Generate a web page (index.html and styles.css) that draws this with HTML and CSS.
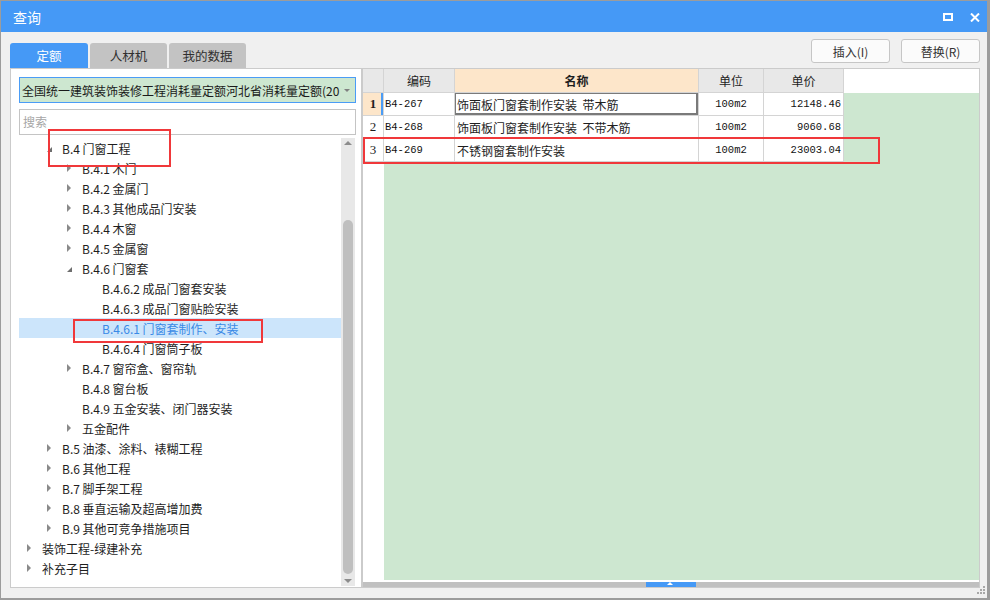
FILE: index.html
```html
<!DOCTYPE html>
<html lang="zh">
<head>
<meta charset="utf-8">
<title>查询</title>
<link rel="stylesheet" href="styles.css">
</head>
<body>
<div class="window">
  <div class="titlebar">
    <span class="title">查询</span>
    <div class="ctrls">
      <svg class="ico" width="10" height="8" viewBox="0 0 10 8"><rect x="1" y="1" width="8" height="6" fill="none" stroke="#fff" stroke-width="2"/></svg>
      <svg class="ico" width="10" height="9" viewBox="0 0 10 9"><path d="M1 0.5 L9 8.5 M9 0.5 L1 8.5" stroke="#fff" stroke-width="2"/></svg>
    </div>
  </div>
  <div class="body">
    <div class="toprow">
      <div class="tabs">
        <div class="tab active">定额</div>
        <div class="tab">人材机</div>
        <div class="tab">我的数据</div>
      </div>
      <div class="buttons">
        <button class="btn">插入(I)</button>
        <button class="btn">替换(R)</button>
      </div>
    </div>
    <div class="panes">
      <div class="left">
        <div class="dropdown">
          <span class="dd-text">全国统一建筑装饰装修工程消耗量定额河北省消耗量定额(20</span>
          <span class="dd-arrow"></span>
        </div>
        <div class="search">搜索</div>
        <div class="treewrap">
          <div class="tree">
            <div class="row l1"><span class="caret open"></span>B.4 门窗工程</div>
            <div class="row l2"><span class="caret closed"></span>B.4.1 木门</div>
            <div class="row l2"><span class="caret closed"></span>B.4.2 金属门</div>
            <div class="row l2"><span class="caret closed"></span>B.4.3 其他成品门安装</div>
            <div class="row l2"><span class="caret closed"></span>B.4.4 木窗</div>
            <div class="row l2"><span class="caret closed"></span>B.4.5 金属窗</div>
            <div class="row l2"><span class="caret open"></span>B.4.6 门窗套</div>
            <div class="row l3"><span class="caret"></span>B.4.6.2 成品门窗套安装</div>
            <div class="row l3"><span class="caret"></span>B.4.6.3 成品门窗贴脸安装</div>
            <div class="row l3 sel"><span class="caret"></span>B.4.6.1 门窗套制作、安装</div>
            <div class="row l3"><span class="caret"></span>B.4.6.4 门窗筒子板</div>
            <div class="row l2"><span class="caret closed"></span>B.4.7 窗帘盒、窗帘轨</div>
            <div class="row l2"><span class="caret"></span>B.4.8 窗台板</div>
            <div class="row l2"><span class="caret"></span>B.4.9 五金安装、闭门器安装</div>
            <div class="row l2"><span class="caret closed"></span>五金配件</div>
            <div class="row l1"><span class="caret closed"></span>B.5 油漆、涂料、裱糊工程</div>
            <div class="row l1"><span class="caret closed"></span>B.6 其他工程</div>
            <div class="row l1"><span class="caret closed"></span>B.7 脚手架工程</div>
            <div class="row l1"><span class="caret closed"></span>B.8 垂直运输及超高增加费</div>
            <div class="row l1"><span class="caret closed"></span>B.9 其他可竞争措施项目</div>
            <div class="row l0"><span class="caret closed"></span>装饰工程-绿建补充</div>
            <div class="row l0"><span class="caret closed"></span>补充子目</div>
          </div>
          <div class="vscroll">
            <span class="arr up"></span>
            <div class="vtrack"><div class="vthumb"></div></div>
            <span class="arr down"></span>
          </div>
        </div>
      </div>
      <div class="right">
        <div class="grid head">
          <div class="c num"></div>
          <div class="c">编码</div>
          <div class="c hl">名称</div>
          <div class="c">单位</div>
          <div class="c">单价</div>
          <div class="c blank"></div>
        </div>
        <div class="grid trow">
          <div class="c num cur">1</div>
          <div class="c code">B4-267</div>
          <div class="c name focus">饰面板门窗套制作安装&nbsp; 带木筋</div>
          <div class="c unit">100m2</div>
          <div class="c price">12148.46</div>
          <div class="c fill"></div>
        </div>
        <div class="grid trow">
          <div class="c num">2</div>
          <div class="c code">B4-268</div>
          <div class="c name">饰面板门窗套制作安装&nbsp; 不带木筋</div>
          <div class="c unit">100m2</div>
          <div class="c price">9060.68</div>
          <div class="c fill"></div>
        </div>
        <div class="grid trow">
          <div class="c num">3</div>
          <div class="c code">B4-269</div>
          <div class="c name">不锈钢窗套制作安装</div>
          <div class="c unit">100m2</div>
          <div class="c price">23003.04</div>
          <div class="c fill"></div>
        </div>
        <div class="filler">
          <div class="fnum"></div>
          <div class="fgreen"></div>
        </div>
        <div class="hscroll">
          <div class="hseg1"></div>
          <div class="hblue"><span class="htri"></span></div>
          <div class="hseg2"></div>
        </div>
      </div>
    </div>
  </div>
  <div class="grip">
    <svg width="10" height="10" viewBox="0 0 10 10"><g fill="#a8a8a8"><rect x="7" y="0" width="2" height="2"/><rect x="4" y="3" width="2" height="2"/><rect x="7" y="3" width="2" height="2"/><rect x="1" y="6" width="2" height="2"/><rect x="4" y="6" width="2" height="2"/><rect x="7" y="6" width="2" height="2"/></g></svg>
  </div>
  <div class="mark m1"></div>
  <div class="mark m2"></div>
  <div class="mark m3"></div>
</div>
</body>
</html>
```

FILE: styles.css
```css
* { box-sizing: border-box; }
html, body { margin: 0; padding: 0; }
body {
  width: 990px; height: 600px; overflow: hidden;
  font-family: "Noto Sans CJK SC", "Noto Sans", sans-serif;
  font-size: 12px; color: #1e1e1e;
  background: #ffffff;
}
.window {
  position: relative;
  width: 990px; height: 600px;
  background: #f0f0f0;
  border: 1px solid #9c9c9c;
  border-right-width: 3px;
  border-bottom-width: 2px;
  display: flex; flex-direction: column;
}
.titlebar {
  height: 31px; flex: none;
  background: #4599f6;
  display: flex; align-items: center; justify-content: space-between;
  padding: 0 7px 0 12px;
}
.title { color: #fff; font-size: 14px; line-height: 1; }
.ctrls { display: flex; gap: 17px; align-items: center; padding-top: 1px; }
.ico { display: block; }
.body { flex: 1; display: flex; flex-direction: column; padding: 7px 7px 10px 9px; }
.toprow { display: flex; justify-content: space-between; align-items: flex-end; height: 29px; }
.tabs { display: flex; gap: 2px; align-items: flex-end; }
.tab {
  width: 78px; height: 25px;
  background: #c3c3c3; color: #303030;
  border-radius: 3px 3px 0 0;
  display: flex; align-items: center; justify-content: center;
  font-size: 12.5px;
}
.tab + .tab { width: 77px; }
.tab.active { background: #4599f6; color: #fff; }
.buttons { display: flex; gap: 11px; align-self: flex-start; }
.btn {
  width: 79px; height: 24px;
  background: #fbfbfb; border: 1px solid #c6c6c6; border-radius: 3px;
  font-family: inherit; font-size: 12px; color: #333;
  padding: 0;
}
.panes { flex: 1; display: flex; min-height: 0; }
.left {
  width: 352px; flex: none;
  background: #fff; border: 1px solid #cbcbcb;
  padding: 8px 0 0 8px;
  display: flex; flex-direction: column;
}
.dropdown {
  width: 337px; height: 26px; flex: none;
  background: #cde7d0; border: 1px solid #4a9cf6;
  display: flex; align-items: center;
  padding-left: 2px; position: relative;
}
.dd-text { white-space: nowrap; font-size: 12px; color: #1a1a1a; }
.dd-arrow {
  position: absolute; right: 5px; top: 11px;
  width: 0; height: 0;
  border-left: 3px solid transparent; border-right: 3px solid transparent;
  border-top: 3px solid #808080;
}
.search {
  width: 337px; height: 26px; flex: none; margin-top: 6px;
  border: 1px solid #c4c4c4;
  color: #a6a6a6; padding-left: 3px; line-height: 24px;
}
.treewrap { flex: 1; display: flex; margin-top: 3px; min-height: 0; }
.tree { width: 322px; }
.row {
  height: 20px; display: flex; align-items: center; white-space: nowrap;
  color: #1e1e1e;
}
.row.l0 { padding-left: 0; }
.row.l1 { padding-left: 20px; }
.row.l2 { padding-left: 40px; }
.row.l3 { padding-left: 60px; }
.row.sel { background: #cce5fb; color: #3a8ae6; }
.caret { width: 23px; height: 20px; flex: none; position: relative; }
.caret.closed::after {
  content: ""; position: absolute; left: 8px; top: 6px;
  border-top: 4px solid transparent; border-bottom: 4px solid transparent;
  border-left: 4px solid #8a8a8a;
}
.caret.open::after {
  content: ""; position: absolute; left: 8px; top: 9px;
  border-left: 5px solid transparent; border-bottom: 5px solid #6e6e6e;
}
.vscroll {
  width: 14px; flex: none; margin-bottom: 1px;
  background: #e8e8e8;
  display: flex; flex-direction: column; align-items: center;
}
.arr { width: 0; height: 0; flex: none; border-left: 4px solid transparent; border-right: 4px solid transparent; }
.arr.up { border-bottom: 4px solid #8c8c8c; margin-top: 3px; }
.arr.down { border-top: 4px solid #8c8c8c; margin: 3px 0 3px; }
.vtrack { flex: 1; width: 100%; display: flex; flex-direction: column; justify-content: flex-end; padding: 0 2px 2px 2px; }
.vthumb { height: 354px; background: #bfbfbf; border-radius: 5px; }
.right {
  flex: 1;
  background: #fff; border: 1px solid #cbcbcb;
  display: flex; flex-direction: column;
}
.grid { display: grid; grid-template-columns: 21px 71px 244px 65px 80px 1fr; flex: none; }
.head { height: 24px; }
.trow { height: 23px; }
.c {
  border-right: 1px solid #d4d4d4; border-bottom: 1px solid #d4d4d4;
  display: flex; align-items: center; white-space: nowrap; overflow: hidden;
}
.head .c { background: #e8e8e8; justify-content: center; color: #1e1e1e; }
.head .c.hl { background: #fde6ca; font-weight: bold; }
.head .c.blank { background: #fff; border: none; }
.trow .c.fill { background: #cde7d0; border: none; }
.num { justify-content: center; font-family: "Liberation Serif", serif; font-size: 13px; }
.num.cur { background: #fde6ca; font-weight: bold; box-shadow: inset -2px 0 0 #4a9cf6; }
.code { font-family: "Liberation Mono", monospace; font-size: 10.5px; padding-left: 1px; color: #111; }
.name { padding-left: 2px; }
.name.focus { box-shadow: inset 0 0 0 1px #7a7a7a, inset -1px -1px 0 1px #7a7a7a; }
.unit { justify-content: center; font-family: "Liberation Mono", monospace; font-size: 10.5px; color: #111; }
.price { justify-content: flex-end; padding-right: 2px; font-family: "Liberation Mono", monospace; font-size: 10.5px; color: #111; }
.filler { flex: 1; display: flex; }
.fnum { width: 21px; flex: none; background: #fff; }
.fgreen { flex: 1; background: #cde7d0; margin-bottom: 2px; }
.hscroll { height: 5px; flex: none; display: flex; background: #c0c0c0; }
.hseg1 { width: 283px; }
.hblue { width: 50px; background: #4599f6; position: relative; }
.htri {
  position: absolute; left: 21px; top: 0;
  border-left: 3px solid transparent; border-right: 3px solid transparent;
  border-bottom: 3px solid #fff;
}
.hseg2 { flex: 1; }
.grip { position: absolute; right: 1px; bottom: 2px; width: 10px; height: 10px; }
.grip svg { display: block; }
.mark { position: absolute; border: 2px solid #f0383a; pointer-events: none; }
.m1 { left: 47px; top: 128px; width: 123px; height: 38px; }
.m2 { left: 72px; top: 318px; width: 190px; height: 24px; }
.m3 { left: 362px; top: 136px; width: 517px; height: 27px; }
```
